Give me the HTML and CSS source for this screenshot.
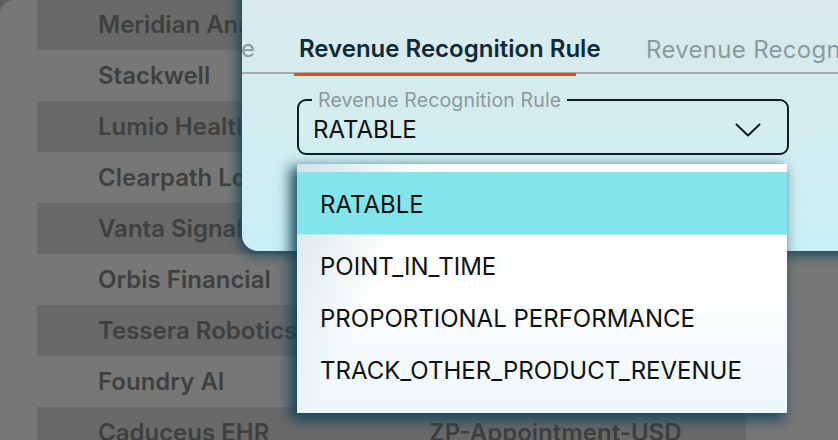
FILE: index.html
```html
<!DOCTYPE html>
<html lang="en">
<head>
<meta charset="utf-8">
<title>Revenue Recognition Rule</title>
<link rel="stylesheet" href="styles.css">
</head>
<body>
<div class="screen">
  <div class="table">
    <div class="row dark"><span class="name">Meridian Analytics</span><span class="plan">ZP-Enterprise-USD</span></div>
    <div class="row"><span class="name">Stackwell</span><span class="plan">ZP-Growth-USD</span></div>
    <div class="row dark"><span class="name">Lumio Health</span><span class="plan">ZP-Appointment-USD</span></div>
    <div class="row"><span class="name">Clearpath Logistics</span><span class="plan">ZP-Starter-USD</span></div>
    <div class="row dark"><span class="name">Vanta Signals</span><span class="plan">ZP-Growth-USD</span></div>
    <div class="row"><span class="name">Orbis Financial</span><span class="plan">ZP-Enterprise-USD</span></div>
    <div class="row dark"><span class="name">Tessera Robotics</span><span class="plan">ZP-Starter-USD</span></div>
    <div class="row"><span class="name">Foundry AI</span><span class="plan">ZP-Growth-USD</span></div>
    <div class="row dark"><span class="name">Caduceus EHR</span><span class="plan">ZP-Appointment-USD</span></div>
  </div>

  <div class="dialog">
    <div class="tabbar">
      <div class="tab prev">Billing Schedule</div>
      <div class="tab active">Revenue Recognition Rule</div>
      <div class="tab next">Revenue Recognition Start</div>
    </div>
    <fieldset class="select">
      <legend>Revenue Recognition Rule</legend>
      <div class="value">
        <span>RATABLE</span>
        <svg class="chevron" width="26" height="16" viewBox="0 0 26 16" aria-hidden="true">
          <polyline points="1.5,2.5 13,13.5 24.5,2.5" fill="none" stroke="#0e1e24" stroke-width="2" stroke-linecap="round" stroke-linejoin="round"/>
        </svg>
      </div>
    </fieldset>
  </div>

  <ul class="menu">
    <li class="item selected">RATABLE</li>
    <li class="item">POINT_IN_TIME</li>
    <li class="item">PROPORTIONAL PERFORMANCE</li>
    <li class="item">TRACK_OTHER_PRODUCT_REVENUE</li>
  </ul>
</div>
</body>
</html>
```

FILE: styles.css
```css
* { box-sizing: border-box; }

html, body {
  margin: 0;
  padding: 0;
}

body {
  width: 838px;
  height: 440px;
  overflow: hidden;
  background: #5f5f5f;
  font-family: Inter, "Noto Sans", sans-serif;
}

.screen {
  position: relative;
  width: 838px;
  height: 440px;
  overflow: hidden;
  background: #777777;
  border-top-left-radius: 14px;
}

/* background table (dimmed by the modal) */
.table {
  margin-top: -1px;
}

.row {
  display: grid;
  grid-template-columns: 331px 1fr;
  align-items: center;
  height: 51px;
  width: 709px;
  margin-left: 37px;
  padding-left: 61px;
  font-size: 24px;
  font-weight: 600;
  color: #3f3f3f;
  white-space: nowrap;
}

.row.dark {
  background: #696969;
}

/* dialog */
.dialog {
  position: absolute;
  left: 242px;
  top: -20px;
  right: -40px;
  height: 271px;
  padding-top: 20px;
  border-radius: 16px;
  overflow: hidden;
  background: linear-gradient(180deg, #dbe9eb 0%, #d3edf0 55%, #c8f0f5 100%);
  box-shadow: 0 0 12px 4px rgba(22, 72, 90, 0.95);
}

.tabbar {
  display: flex;
  gap: 44px;
  height: 74px;
  border-bottom: 2px solid #a3abae;
}

.tab {
  flex-shrink: 0;
  padding-top: 35px;
  font-size: 24px;
  line-height: 28px;
  color: #8e999c;
  white-space: nowrap;
}

.tab.prev {
  width: 200px;
  margin-left: -187px;
  text-align: right;
  overflow: hidden;
}

.tab.active {
  position: relative;
  width: 303px;
  font-weight: 600;
  color: #0e2a38;
}

.tab.active::after {
  content: "";
  position: absolute;
  left: -5px;
  bottom: -4px;
  width: 282px;
  height: 3px;
  background: #f2441c;
}

.tab.next {
  padding-top: 36px;
  letter-spacing: 0.3px;
}

/* outlined select */
.select {
  margin: 15px 0 0 55px;
  width: 492px;
  min-width: 0;
  padding: 0 26px 0 14px;
  border: 2px solid #0f1f25;
  border-radius: 9px;
}

.select legend {
  margin-left: -1px;
  padding: 0 6px;
  font-size: 19.5px;
  letter-spacing: 0.15px;
  line-height: 22px;
  color: #8d989b;
}

.value {
  display: flex;
  align-items: center;
  justify-content: space-between;
  height: 37px;
  margin-bottom: 5px;
  font-size: 24px;
  line-height: 37px;
  color: #111111;
}

.chevron {
  display: block;
}

/* dropdown menu */
.menu {
  position: absolute;
  left: 297px;
  top: 164px;
  width: 490px;
  height: 249px;
  margin: 0;
  padding: 8px 0 0;
  list-style: none;
  background:
    linear-gradient(115deg, rgba(200, 222, 226, 0.85) 0%, rgba(255, 255, 255, 0) 22%),
    linear-gradient(180deg, #ffffff 45%, #edf7fa 100%);
  box-shadow: -5px 5px 12px 2px rgba(18, 68, 86, 0.9);
}

.item {
  display: flex;
  align-items: center;
  height: 52px;
  padding-left: 23px;
  font-size: 24px;
  color: #111111;
  white-space: nowrap;
}

.item.selected {
  height: 63px;
  padding-top: 2px;
  margin-bottom: 5px;
  background: #84e4ec;
  border-bottom: 1px solid #b3eff3;
}
```
